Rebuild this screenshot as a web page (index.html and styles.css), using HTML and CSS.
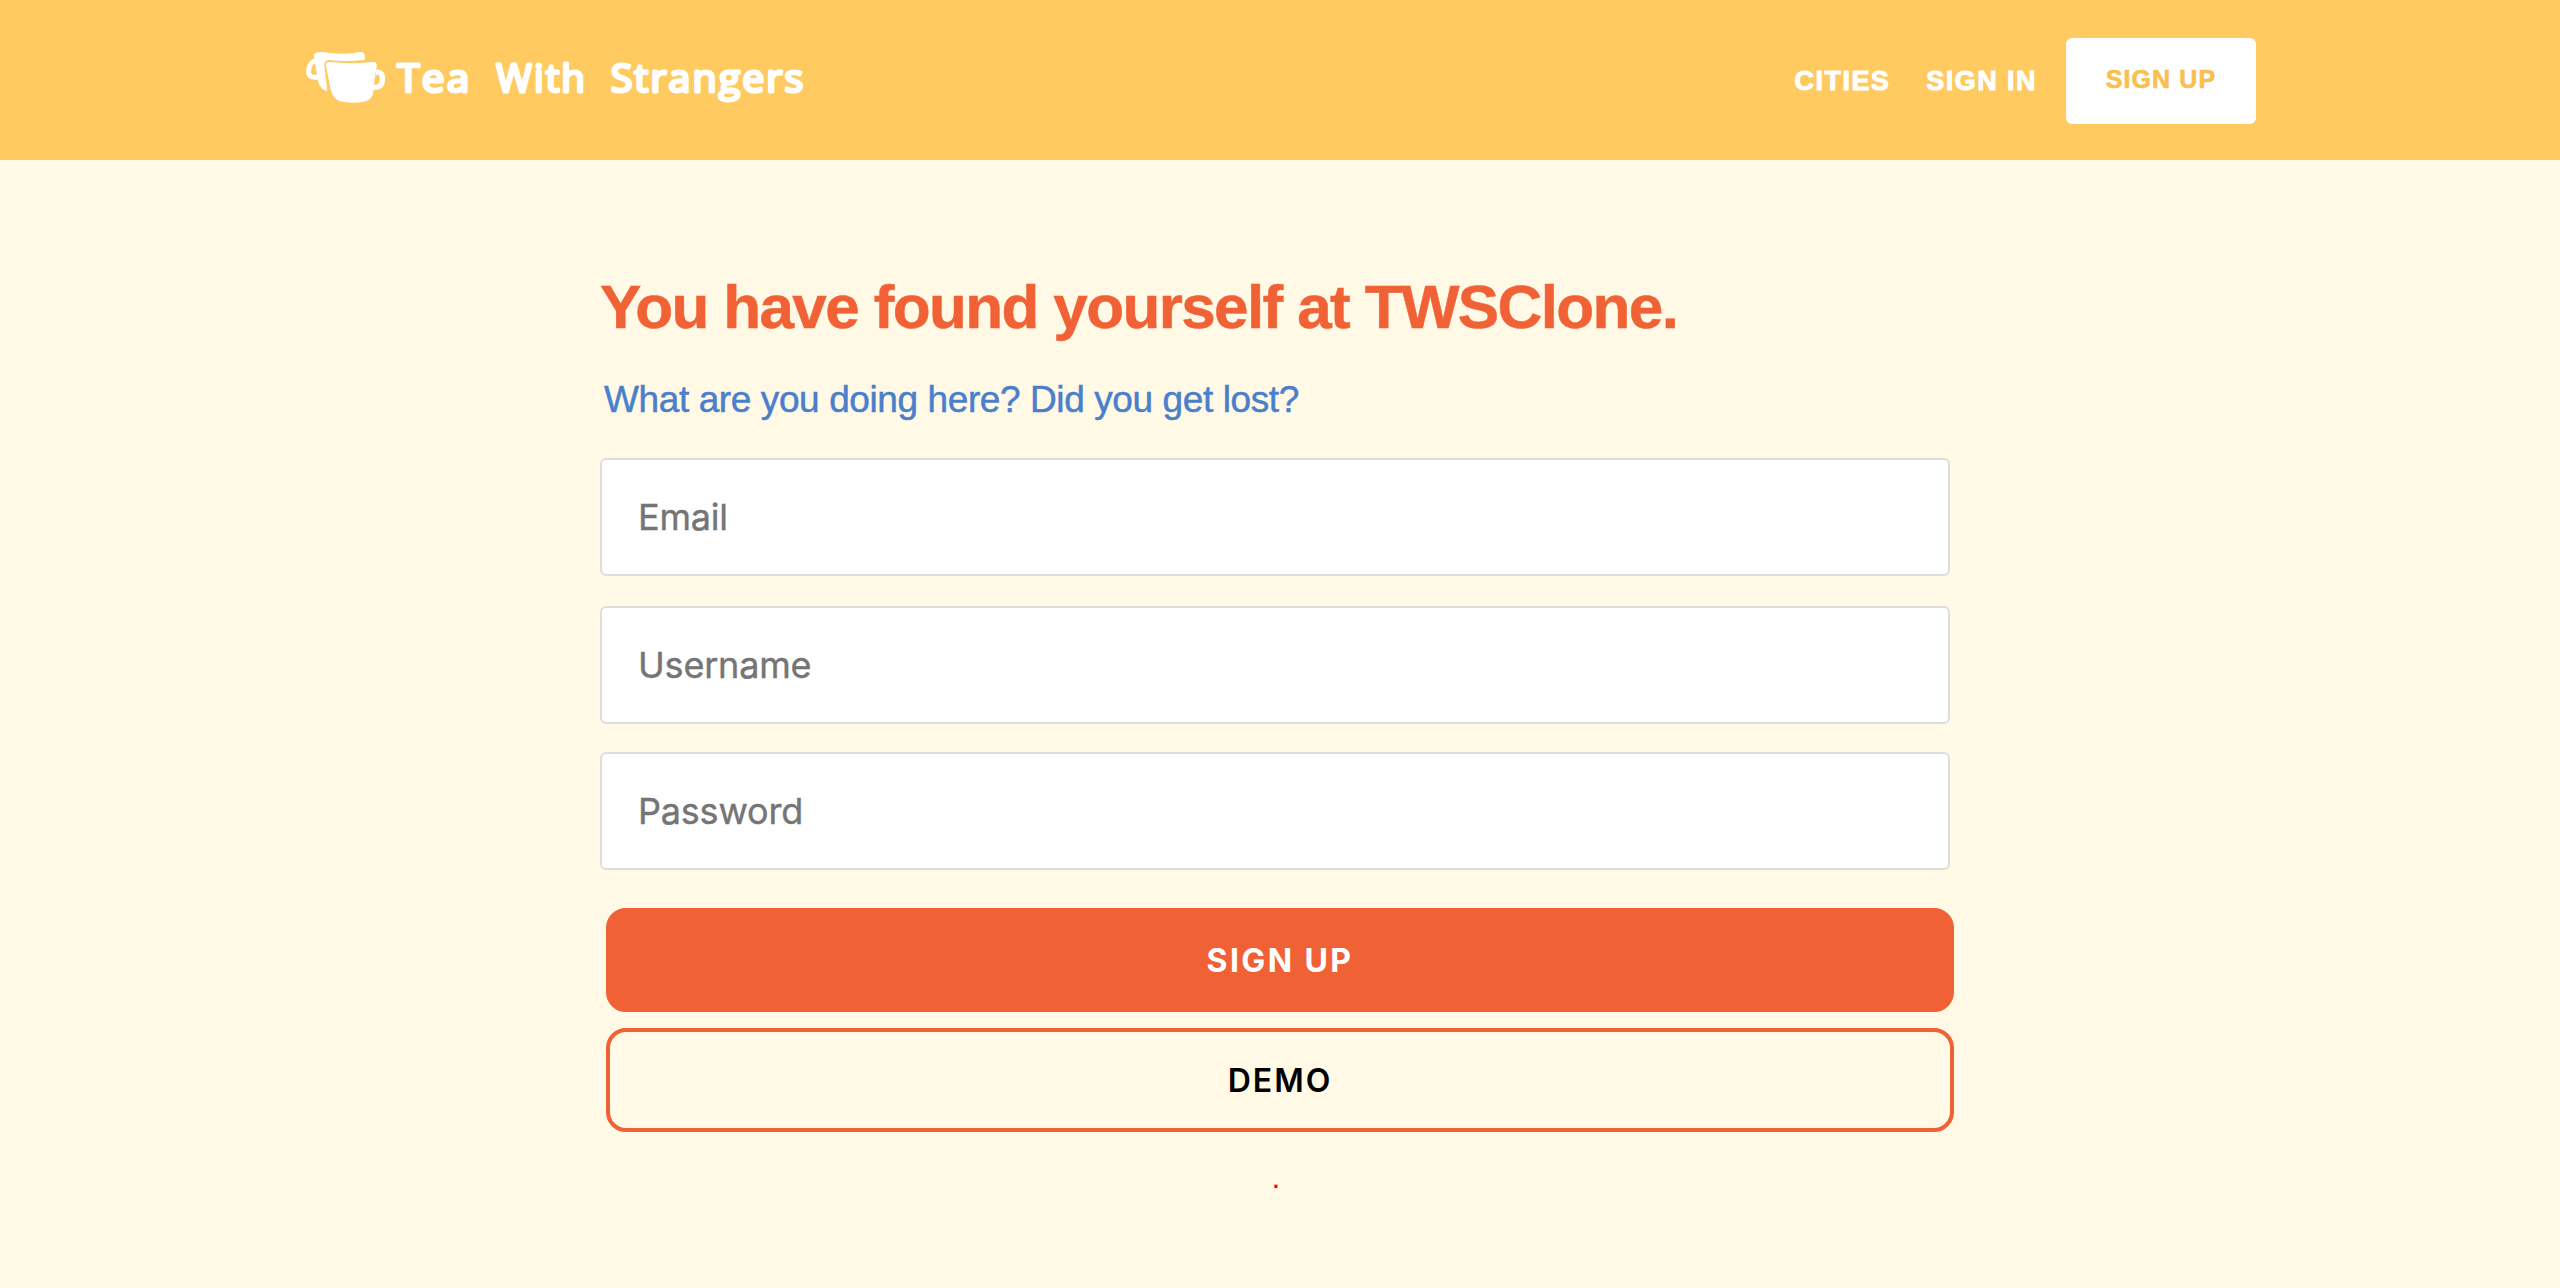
FILE: index.html
```html
<!DOCTYPE html>
<html lang="en">
<head>
<meta charset="utf-8">
<title>Tea With Strangers</title>
<link rel="stylesheet" href="styles.css">
</head>
<body>
<header class="header">
  <a class="brand" aria-label="Tea With Strangers">
    <svg class="logo" viewBox="48 0 1530 270" fill="#fff">
      <path d="M72 84 C70 74 74 68 84 67 L98 66 Q156 76 212 66 Q222 65 224 74 L225 89 Q165 97 118 90 Q102 91 103 106 L112 183 Q91 180 84 154 Z"/>
      <path d="M80 93 C67 92 60 99 56 120 C54 137 63 145 85 141" fill="none" stroke="#fff" stroke-width="15"/>
      <path d="M108 108 Q107 95 119 96 Q187 103 248 96 Q261 95 260 107 Q253 150 250 186 Q247 212 217 216 Q182 221 150 214 Q129 207 122 178 Z"/>
      <path d="M257 127 C273 124 279 133 277 153 C274 170 264 174 247 171" fill="none" stroke="#fff" stroke-width="16"/>
      <g class="wordmark">
        <text x="322" y="185" textLength="222" lengthAdjust="spacingAndGlyphs">Tea</text>
        <text x="619" y="185" textLength="272" lengthAdjust="spacingAndGlyphs">With</text>
        <text x="962" y="185" textLength="584" lengthAdjust="spacingAndGlyphs">Strangers</text>
      </g>
    </svg>
  </a>
  <nav class="nav">
    <a class="link cities">CITIES</a>
    <a class="link signin">SIGN IN</a>
    <a class="signup">SIGN UP</a>
  </nav>
</header>
<main class="main">
  <h1 class="title">You have found yourself at TWSClone.</h1>
  <p class="subtitle">What are you doing here? Did you get lost?</p>
  <form class="form">
    <input class="field" type="email" placeholder="Email">
    <input class="field username" type="text" placeholder="Username">
    <input class="field password" type="password" placeholder="Password">
    <button class="button primary" type="button">SIGN UP</button>
    <button class="button outline" type="button">DEMO</button>
  </form>
  <p class="message">.</p>
</main>
</body>
</html>
```
FILE: styles.css
```css
* { box-sizing: border-box; }
body {
  margin: 0;
  height: 1288px;
  overflow: hidden;
  background: #fff9e6;
  font-family: "Liberation Sans", Arial, sans-serif;
}
.header {
  display: flex;
  justify-content: space-between;
  height: 160px;
  padding: 30px 304px 0 306px;
  background: #ffca60;
}
.logo { display: block; width: 510px; height: 90px; }
.wordmark {
  font-family: "Open Sans", sans-serif;
  font-size: 116px;
  font-weight: 500;
  letter-spacing: 6px;
  stroke: #fff;
  stroke-width: 9px;
  stroke-linejoin: round;
}
.nav {
  display: flex;
  align-items: center;
  height: 86px;
  margin-top: 8px;
  color: #fff;
  font-weight: 700;
  white-space: nowrap;
}
.link {
  font-size: 27px;
  letter-spacing: 1.45px;
  -webkit-text-stroke: 1px currentColor;
}
.cities { margin-right: 36px; }
.signin { margin-right: 29px; }
.signup {
  width: 190px;
  height: 86px;
  border-radius: 6px;
  background: #fff;
  color: #f9bf50;
  font-size: 25px;
  line-height: 82px;
  letter-spacing: 1.1px;
  text-align: center;
  -webkit-text-stroke: 0.6px currentColor;
}
.main {
  width: 1354px;
  margin-left: 600px;
  padding-top: 112px;
}
.title {
  margin: 0;
  color: #f06236;
  font-size: 62px;
  line-height: 70px;
  letter-spacing: -1.62px;
  white-space: nowrap;
  -webkit-text-stroke: 0.5px currentColor;
}
.subtitle {
  margin: 37px 0 37px 4px;
  color: #4a7fcb;
  font-size: 37px;
  line-height: 42px;
  letter-spacing: -0.4px;
  -webkit-text-stroke: 0.5px currentColor;
}
.form { display: flex; flex-direction: column; }
.field {
  width: 1350px;
  height: 118px;
  padding: 0 36px;
  border: 2px solid #dddddd;
  border-radius: 6px;
  background: #fff;
  font-family: Inter, sans-serif;
  font-size: 36px;
  letter-spacing: -0.2px;
}
.field::placeholder { color: #757575; opacity: 1; -webkit-text-stroke: 0.4px currentColor; }
.username { margin-top: 30px; }
.password { margin-top: 28px; }
.button {
  width: 1348px;
  height: 104px;
  margin-left: 6px;
  padding: 0;
  border: 4px solid #f06236;
  border-radius: 20px;
  font-family: Inter, sans-serif;
  font-size: 32px;
  font-weight: 600;
  letter-spacing: 2px;
}
.primary { margin-top: 38px; background: #f06236; color: #fff; font-weight: 700; letter-spacing: 2.4px; }
.outline { margin-top: 16px; background: transparent; color: #000; }
.message {
  margin: 29px 0 0;
  width: 1352px;
  color: #f00;
  font-size: 32px;
  line-height: 32px;
  text-align: center;
}
```
